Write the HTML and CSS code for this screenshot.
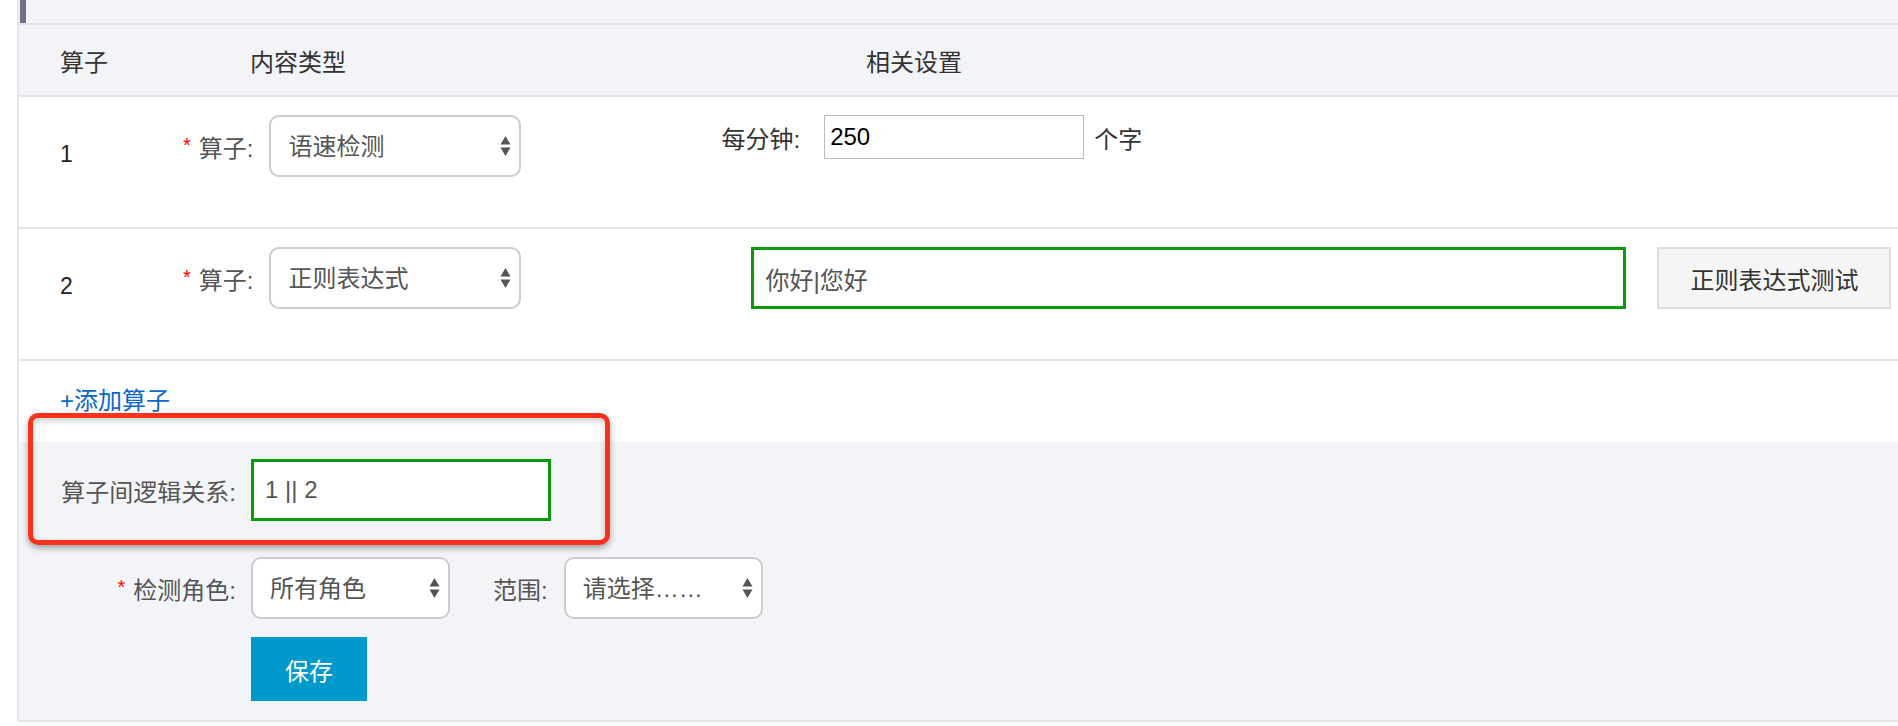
FILE: index.html
```html
<!DOCTYPE html>
<html lang="zh-CN">
<head>
    <meta charset="UTF-8">
    <meta name="viewport" content="width=device-width, initial-scale=1.0">
    <title>算子设置</title>
    <link rel="stylesheet" href="styles.css">
</head>
<body>
    <div class="panel">
        <div class="topbar"><div class="marker"></div></div>

        <div class="head">
            <div class="c-idx">算子</div>
            <div class="c-type">内容类型</div>
            <div class="c-set">相关设置</div>
        </div>

        <!-- operator 1 -->
        <div class="item">
            <div class="idx">1</div>
            <div class="field">
                <label class="lbl req">算子:</label>
                <div class="select">
                    <select>
                        <option>语速检测</option>
                        <option>正则表达式</option>
                    </select>
                    <svg class="arrows" viewBox="0 0 11 22"><polygon points="5.5,1 10.5,9.5 0.5,9.5"/><polygon points="0.5,12.5 10.5,12.5 5.5,21"/></svg>
                </div>
            </div>
            <div class="speed">
                <span class="lbl-dark">每分钟:</span>
                <input class="num" type="text" value="250">
                <span class="lbl-dark unit">个字</span>
            </div>
        </div>

        <!-- operator 2 -->
        <div class="item">
            <div class="idx">2</div>
            <div class="field">
                <label class="lbl req">算子:</label>
                <div class="select">
                    <select>
                        <option>正则表达式</option>
                        <option>语速检测</option>
                    </select>
                    <svg class="arrows" viewBox="0 0 11 22"><polygon points="5.5,1 10.5,9.5 0.5,9.5"/><polygon points="0.5,12.5 10.5,12.5 5.5,21"/></svg>
                </div>
            </div>
            <input class="regex" type="text" value="你好|您好">
            <button class="test-btn">正则表达式测试</button>
        </div>

        <div class="add"><a href="#">+添加算子</a></div>

        <div class="footer">
            <div class="annot"></div>

            <div class="form-row">
                <label class="flabel">算子间逻辑关系:</label>
                <input class="logic" type="text" value="1 || 2">
            </div>

            <div class="form-row role-row">
                <label class="flabel"><span class="star">*</span>检测角色:</label>
                <div class="select small">
                    <select>
                        <option>所有角色</option>
                    </select>
                    <svg class="arrows" viewBox="0 0 11 22"><polygon points="5.5,1 10.5,9.5 0.5,9.5"/><polygon points="0.5,12.5 10.5,12.5 5.5,21"/></svg>
                </div>
                <label class="lbl range-lbl">范围:</label>
                <div class="select small">
                    <select>
                        <option>请选择……</option>
                    </select>
                    <svg class="arrows" viewBox="0 0 11 22"><polygon points="5.5,1 10.5,9.5 0.5,9.5"/><polygon points="0.5,12.5 10.5,12.5 5.5,21"/></svg>
                </div>
            </div>

            <button class="save">保存</button>
        </div>
    </div>
</body>
</html>
```

FILE: styles.css
```css
* {
    box-sizing: border-box;
}

body {
    margin: 0;
    font-family: "Liberation Sans", "Noto Sans CJK SC", sans-serif;
    font-size: 24px;
    color: #555;
    background: #fff;
}

.panel {
    margin-left: 17px;
    border-left: 2px solid #e3e6ea;
    overflow: hidden;
}

.topbar {
    display: flex;
    height: 25px;
    background: #f3f4f8;
    border-bottom: 2px solid #e1e5ea;
}

.topbar .marker {
    width: 6px;
    margin-left: 1px;
    background: #706f83;
}

.head {
    display: flex;
    align-items: center;
    height: 72px;
    padding-left: 41px;
    background: #f3f4f8;
    border-bottom: 2px solid #e1e5ea;
    color: #333;
}

.head .c-idx {
    width: 190px;
}

.head .c-type {
    width: 616px;
}

.item {
    display: flex;
    align-items: flex-start;
    height: 132px;
    padding: 18px 0 0 41px;
    border-bottom: 2px solid #e1e5ea;
}

.idx {
    width: 123px;
    margin-top: 8px;
    line-height: 62px;
    font-size: 23px;
    color: #222;
}

.field {
    display: flex;
    align-items: center;
    height: 62px;
}

.lbl {
    margin-right: 16px;
    white-space: nowrap;
    color: #555;
}

.req::before, .star {
    content: "*";
    margin-right: 8px;
    font-size: 20px;
    vertical-align: 5px;
    color: #f00;
}

.select {
    position: relative;
    width: 252px;
    height: 62px;
}

.select.small {
    width: 199px;
}

.select select {
    width: 100%;
    height: 100%;
    padding-left: 17px;
    appearance: none;
    -webkit-appearance: none;
    border: 2px solid #ccc;
    border-radius: 10px;
    background: #fff;
    font: inherit;
    color: #555;
    outline: none;
}

.select .arrows {
    position: absolute;
    right: 10px;
    top: 20px;
    width: 11px;
    height: 22px;
    fill: #555;
    pointer-events: none;
}

.speed {
    display: flex;
    align-items: center;
    height: 44px;
    margin-left: 200px;
}

.lbl-dark {
    color: #333;
}

.num {
    width: 260px;
    height: 44px;
    margin-left: 24px;
    padding: 0 5px;
    border: 1px solid #bbb;
    font: 24px "Liberation Sans", sans-serif;
    color: #000;
}

.unit {
    margin-left: 10px;
}

.regex, .logic {
    height: 62px;
    padding-left: 11px;
    border: 3px solid #0a9a0a;
    font: inherit;
    color: #555;
    background: #fff;
    outline: none;
}

.regex {
    width: 875px;
    margin-left: 230px;
}

.test-btn {
    width: 234px;
    height: 62px;
    margin-left: 31px;
    background: #f5f5f5;
    border: 2px solid #ddd;
    font: inherit;
    color: #333;
}

.add {
    height: 81px;
    padding: 22px 0 0 41px;
}

.add a {
    line-height: 36px;
    color: #0b67c9;
    text-decoration: none;
}

.footer {
    position: relative;
    height: 280px;
    padding: 17px 0 0 41px;
    background: #f3f4f8;
    border-bottom: 2px solid #e1e5ea;
}

.annot {
    position: absolute;
    left: 9px;
    top: -29px;
    width: 582px;
    height: 132px;
    border: 5px solid #f5321e;
    border-radius: 10px;
    box-shadow: 0 3px 6px rgba(0, 0, 0, .35), inset 0 3px 6px rgba(0, 0, 0, .2);
    pointer-events: none;
}

.form-row {
    display: flex;
    align-items: center;
    height: 62px;
}

.flabel {
    width: 191px;
    padding-right: 15px;
    text-align: right;
    white-space: nowrap;
}

.logic {
    width: 300px;
}

.role-row {
    margin-top: 36px;
}

.range-lbl {
    margin-left: 43px;
}

.save {
    display: block;
    width: 116px;
    height: 64px;
    margin: 18px 0 0 191px;
    background: #0099cc;
    border: none;
    font: inherit;
    color: #fff;
}
```
